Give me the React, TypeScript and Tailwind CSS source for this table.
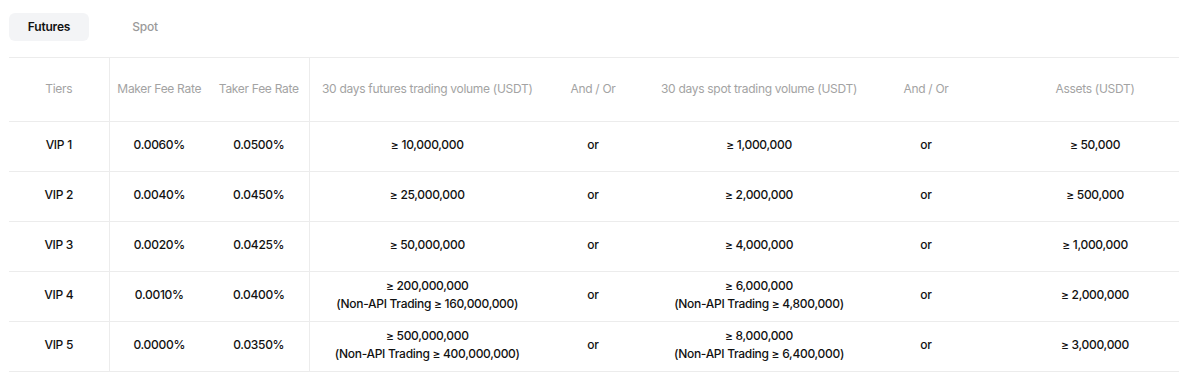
import React from "react";

type Row = {
  tier: string;
  maker: string;
  taker: string;
  fut: string;
  futSub?: string;
  spot: string;
  spotSub?: string;
  assets: string;
};

const rows: Row[] = [
  { tier: "VIP 1", maker: "0.0060%", taker: "0.0500%", fut: "≥ 10,000,000", spot: "≥ 1,000,000", assets: "≥ 50,000" },
  { tier: "VIP 2", maker: "0.0040%", taker: "0.0450%", fut: "≥ 25,000,000", spot: "≥ 2,000,000", assets: "≥ 500,000" },
  { tier: "VIP 3", maker: "0.0020%", taker: "0.0425%", fut: "≥ 50,000,000", spot: "≥ 4,000,000", assets: "≥ 1,000,000" },
  {
    tier: "VIP 4",
    maker: "0.0010%",
    taker: "0.0400%",
    fut: "≥ 200,000,000",
    futSub: "(Non-API Trading ≥ 160,000,000)",
    spot: "≥ 6,000,000",
    spotSub: "(Non-API Trading ≥ 4,800,000)",
    assets: "≥ 2,000,000",
  },
  {
    tier: "VIP 5",
    maker: "0.0000%",
    taker: "0.0350%",
    fut: "≥ 500,000,000",
    futSub: "(Non-API Trading ≥ 400,000,000)",
    spot: "≥ 8,000,000",
    spotSub: "(Non-API Trading ≥ 6,400,000)",
    assets: "≥ 3,000,000",
  },
];

export default function App() {
  return (
    <div
      className="w-[1179px] h-[386px] bg-white overflow-hidden"
      style={{ fontFamily: "Inter, 'Liberation Sans', sans-serif" }}
    >
      <div className="flex pl-[9px] pt-[13px]">
        <div className="w-[80px] h-[28px] rounded-[6px] bg-[#f3f4f6] flex items-center justify-center text-[12px] font-semibold text-[#111] tracking-[-0.2px]">
          Futures
        </div>
        <div className="w-[112px] h-[28px] flex items-center justify-center text-[12px] font-medium text-[#9a9a9a] tracking-[-0.2px]">
          Spot
        </div>
      </div>
      <div className="pl-[9px] pt-[16px]">
        <table className="table-fixed border-collapse w-[1170px] text-[12px] tracking-[-0.3px]">
          <colgroup>
            <col className="w-[100px]" />
            <col className="w-[100px]" />
            <col className="w-[100px]" />
            <col className="w-[236px]" />
            <col className="w-[96px]" />
            <col className="w-[236px]" />
            <col className="w-[98px]" />
            <col className="w-[204px]" />
          </colgroup>
          <thead>
            <tr className="h-[64px] border-y border-[#ececec] text-[#a3a3a3]">
              <th className="font-normal text-center pb-[2px] border-r border-[#ececec]">Tiers</th>
              <th className="font-normal text-center pb-[2px]">Maker Fee Rate</th>
              <th className="font-normal text-center pb-[2px] border-r border-[#ececec]">Taker Fee Rate</th>
              <th className="font-normal text-center pb-[2px]">30 days futures trading volume (USDT)</th>
              <th className="font-normal text-center pb-[2px]">And / Or</th>
              <th className="font-normal text-center pb-[2px]">30 days spot trading volume (USDT)</th>
              <th className="font-normal text-center pb-[2px]">And / Or</th>
              <th className="font-normal text-center pb-[2px] pl-[36px]">Assets (USDT)</th>
            </tr>
          </thead>
          <tbody className="text-[#111] font-medium">
            {rows.map((r) => (
              <tr key={r.tier} className="h-[50px] border-b border-[#ececec]">
                <td className="text-center pb-[4px] border-r border-[#ececec]">{r.tier}</td>
                <td className="text-center pb-[4px]">{r.maker}</td>
                <td className="text-center pb-[4px] border-r border-[#ececec]">{r.taker}</td>
                <td className="text-center pb-[4px] leading-[18px]">
                  <div>{r.fut}</div>
                  {r.futSub && <div>{r.futSub}</div>}
                </td>
                <td className="text-center pb-[4px]">or</td>
                <td className="text-center pb-[4px] leading-[18px]">
                  <div>{r.spot}</div>
                  {r.spotSub && <div>{r.spotSub}</div>}
                </td>
                <td className="text-center pb-[4px]">or</td>
                <td className="text-center pb-[4px] pl-[36px]">{r.assets}</td>
              </tr>
            ))}
          </tbody>
        </table>
      </div>
    </div>
  );
}
